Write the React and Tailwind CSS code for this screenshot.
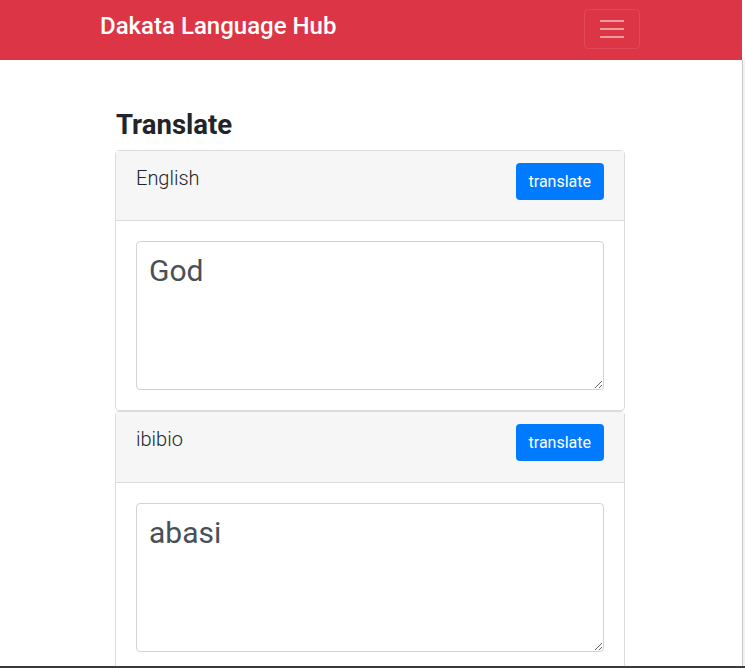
import { useState } from 'react';

function LangCard({ lang, value, onChange, headerH }) {
  return (
    <div className="border border-[#dcdcdc] rounded-[4px] bg-white">
      <div className={`${headerH} bg-[#f6f6f6] border-b border-[#dcdcdc] flex justify-between items-start px-5 pt-3`}>
        <span className="text-[20px] font-light text-[#212529] leading-[30px]">{lang}</span>
        <button className="bg-[#007bff] text-white text-[16px] h-[37px] px-[13px] rounded-[4px] leading-none">
          translate
        </button>
      </div>
      <div className="px-5 pt-5 pb-5">
        <textarea
          value={value}
          onChange={onChange}
          className="block w-full h-[149px] border border-[#cfd4d9] rounded-[4px] px-3 pt-[9px] text-[30px] leading-[40px] text-[#495057] outline-none"
        />
      </div>
    </div>
  );
}

export default function App() {
  const [english, setEnglish] = useState('God');
  const [ibibio, setIbibio] = useState('abasi');

  return (
    <div className="h-[668px] overflow-hidden flex flex-col bg-white" style={{ fontFamily: 'Roboto, "Liberation Sans", sans-serif' }}>
      <div className="flex flex-1 min-h-0">
        <div className="w-[742px] overflow-hidden">
          {/* navbar */}
          <nav className="h-[60px] bg-[#dc3545] flex items-center justify-between pl-[100px] pr-[102px]">
            <span className="text-white text-[24px] font-medium pb-[8px]">Dakata Language Hub</span>
            <button className="w-[56px] h-[40px] border border-white/10 rounded-[4px] flex flex-col items-center justify-center gap-[6px] mb-[2px]">
              <span className="block w-[24px] h-[2px] bg-white/50" />
              <span className="block w-[24px] h-[2px] bg-white/50" />
              <span className="block w-[24px] h-[2px] bg-white/50" />
            </button>
          </nav>

          <main className="w-[510px] ml-[115px] pt-[48px]">
            <h1 className="text-[27.5px] font-bold text-[#212529] leading-[34px] mb-[8px] pl-px">Translate</h1>
            <LangCard lang="English" headerH="h-[70px]" value={english} onChange={(e) => setEnglish(e.target.value)} />
            <LangCard lang="ibibio" headerH="h-[71px]" value={ibibio} onChange={(e) => setIbibio(e.target.value)} />
          </main>
        </div>
        <div className="w-[3px] border-l border-[#c8c8c8] bg-[#f2f2f2] mt-[60px]" />
      </div>
      <div className="h-[2px] bg-[#3a3a3a]" />
    </div>
  );
}
